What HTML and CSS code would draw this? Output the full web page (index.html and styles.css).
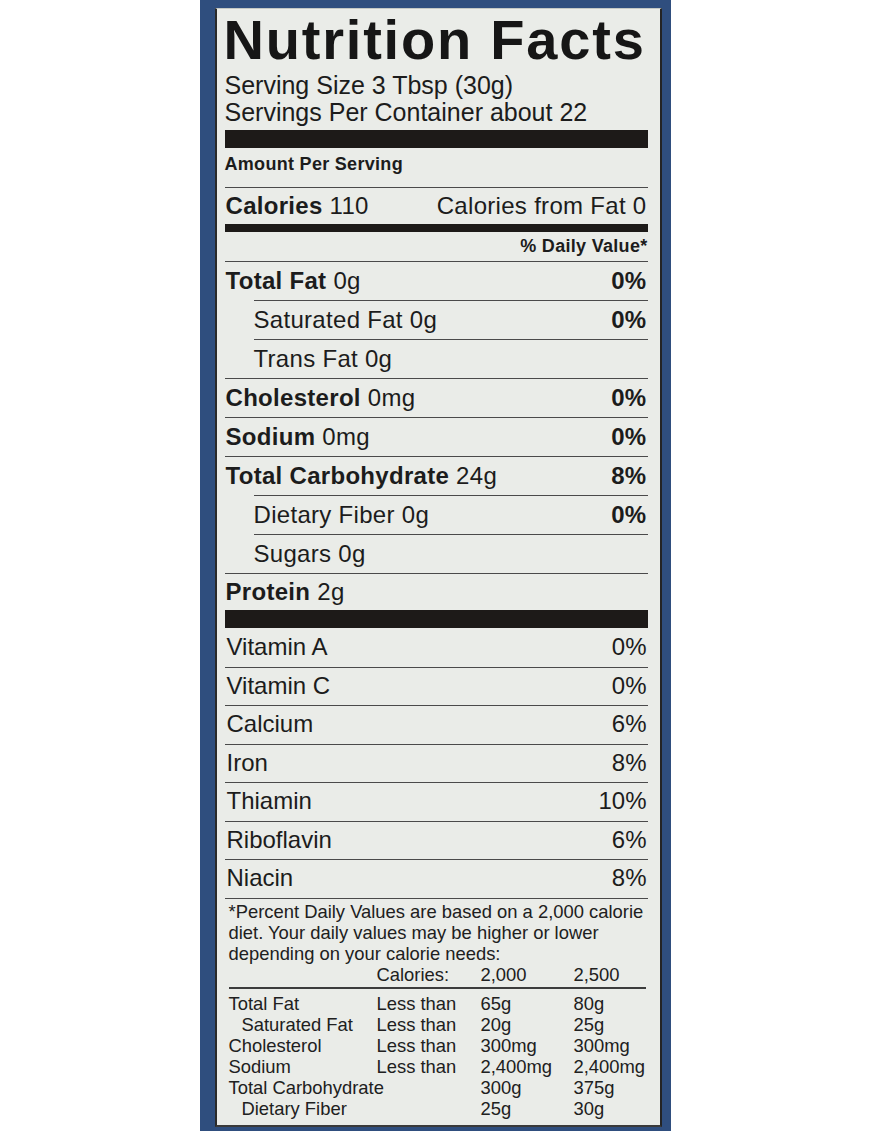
FILE: index.html
```html
<!DOCTYPE html>
<html>
<head>
  <meta charset="UTF-8">
  <title>Nutrition Facts</title>
  <link rel="stylesheet" href="styles.css">
</head>
<body>
  <div class="package">
    <div class="label">
      <h1 class="title">Nutrition Facts</h1>
      <div class="serving">Serving Size 3 Tbsp (30g)</div>
      <div class="serving">Servings Per Container about 22</div>

      <div class="bar bar-thick"></div>
      <div class="amount">Amount Per Serving</div>
      <div class="row row-calories">
        <span><b>Calories</b> 110</span>
        <span>Calories from Fat 0</span>
      </div>
      <div class="bar bar-medium"></div>
      <div class="dv-head">% Daily Value*</div>

      <!-- nutrients -->
      <div class="row"><span><b>Total Fat</b> 0g</span><b>0%</b></div>
      <div class="row sub"><span>Saturated Fat 0g</span><b>0%</b></div>
      <div class="row sub"><span>Trans Fat 0g</span></div>
      <div class="row"><span><b>Cholesterol</b> 0mg</span><b>0%</b></div>
      <div class="row"><span><b>Sodium</b> 0mg</span><b>0%</b></div>
      <div class="row"><span><b>Total Carbohydrate</b> 24g</span><b>8%</b></div>
      <div class="row sub"><span>Dietary Fiber 0g</span><b>0%</b></div>
      <div class="row sub"><span>Sugars 0g</span></div>
      <div class="row row-last"><span><b>Protein</b> 2g</span></div>

      <div class="bar bar-thick"></div>

      <!-- vitamins and minerals -->
      <div class="row vit first"><span>Vitamin A</span><span>0%</span></div>
      <div class="row vit"><span>Vitamin C</span><span>0%</span></div>
      <div class="row vit"><span>Calcium</span><span>6%</span></div>
      <div class="row vit"><span>Iron</span><span>8%</span></div>
      <div class="row vit"><span>Thiamin</span><span>10%</span></div>
      <div class="row vit"><span>Riboflavin</span><span>6%</span></div>
      <div class="row vit"><span>Niacin</span><span>8%</span></div>

      <div class="footnote">
        <p class="note">*Percent Daily Values are based on a 2,000 calorie<br>diet. Your daily values may be higher or lower<br>depending on your calorie needs:</p>
        <div class="dv-grid">
          <span></span><span>Calories:</span><span>2,000</span><span>2,500</span>
        </div>
        <div class="dv-grid dv-table">
          <span>Total Fat</span><span>Less than</span><span>65g</span><span>80g</span>
          <span class="indent">Saturated Fat</span><span>Less than</span><span>20g</span><span>25g</span>
          <span>Cholesterol</span><span>Less than</span><span>300mg</span><span>300mg</span>
          <span>Sodium</span><span>Less than</span><span>2,400mg</span><span>2,400mg</span>
          <span>Total Carbohydrate</span><span></span><span>300g</span><span>375g</span>
          <span class="indent">Dietary Fiber</span><span></span><span>25g</span><span>30g</span>
        </div>
      </div>
    </div>
  </div>
</body>
</html>
```

FILE: styles.css
```css
html, body {
  margin: 0;
  padding: 0;
  background-color: #ffffff;
  font-family: "Liberation Sans", Arial, Helvetica, sans-serif;
  color: #1c1c1c;
}

/* blue box side around the label */
.package {
  width: 471px;
  height: 1131px;
  margin: 0 auto;
  box-sizing: border-box;
  padding: 8px 9px 4px 15px;
  background-color: #2f4e7e;
}

.label {
  height: 100%;
  box-sizing: border-box;
  padding: 3px 12px 0 8px;
  background-color: #eaece8;
  border-top: 1px solid #c4c8c4;
  border-left: 2px solid #2a2a2a;
  border-right: 2px solid #242424;
  border-bottom: 2px solid #3a3a3a;
}

.title {
  margin: 0 0 0 -1px;
  font-size: 56px;
  line-height: 56px;
  font-weight: bold;
  letter-spacing: 1.8px;
  color: #161616;
}

.serving {
  font-size: 25px;
  line-height: 27px;
}

.serving:first-of-type {
  margin-top: 4px;
}

.bar {
  background-color: #1d1a18;
}

.bar-thick {
  height: 18px;
}

.serving + .bar-thick {
  margin-top: 4px;
}

.bar-medium {
  height: 8px;
}

.amount {
  font-size: 18px;
  font-weight: bold;
  line-height: 32px;
  padding-bottom: 7px;
  letter-spacing: 0.3px;
}

.dv-head {
  font-size: 18px;
  font-weight: bold;
  line-height: 29px;
  height: 29px;
  text-align: right;
  letter-spacing: 0.3px;
}

/* one line of the table */
.row {
  display: flex;
  justify-content: space-between;
  align-items: center;
  box-sizing: border-box;
  height: 39px;
  padding: 0 1px 2px 1px;
  border-top: 1px solid #4a4a4a;
  font-size: 24px;
  line-height: 27px;
  letter-spacing: 0.3px;
  white-space: nowrap;
}

.row b {
  font-weight: bold;
}

.row.sub {
  margin-left: 29px;
  padding-left: 0;
}

.row-calories {
  height: 37px;
}

.row-last {
  height: 37px;
}

.row.vit {
  height: 38.5px;
  letter-spacing: 0;
  padding-left: 2px;
}

.row.vit.first {
  border-top: none;
}

.footnote {
  border-top: 1px solid #4a4a4a;
  padding: 2px 2px 0 4px;
  font-size: 18.4px;
  line-height: 21px;
  white-space: nowrap;
  color: #202020;
}

.note {
  margin: 0;
}

.dv-grid {
  display: grid;
  grid-template-columns: 148px 104px 93px auto;
}

.dv-table {
  margin-top: 2px;
  padding-top: 4px;
  border-top: 2px solid #3c3c3c;
}

.indent {
  padding-left: 13px;
}
```
